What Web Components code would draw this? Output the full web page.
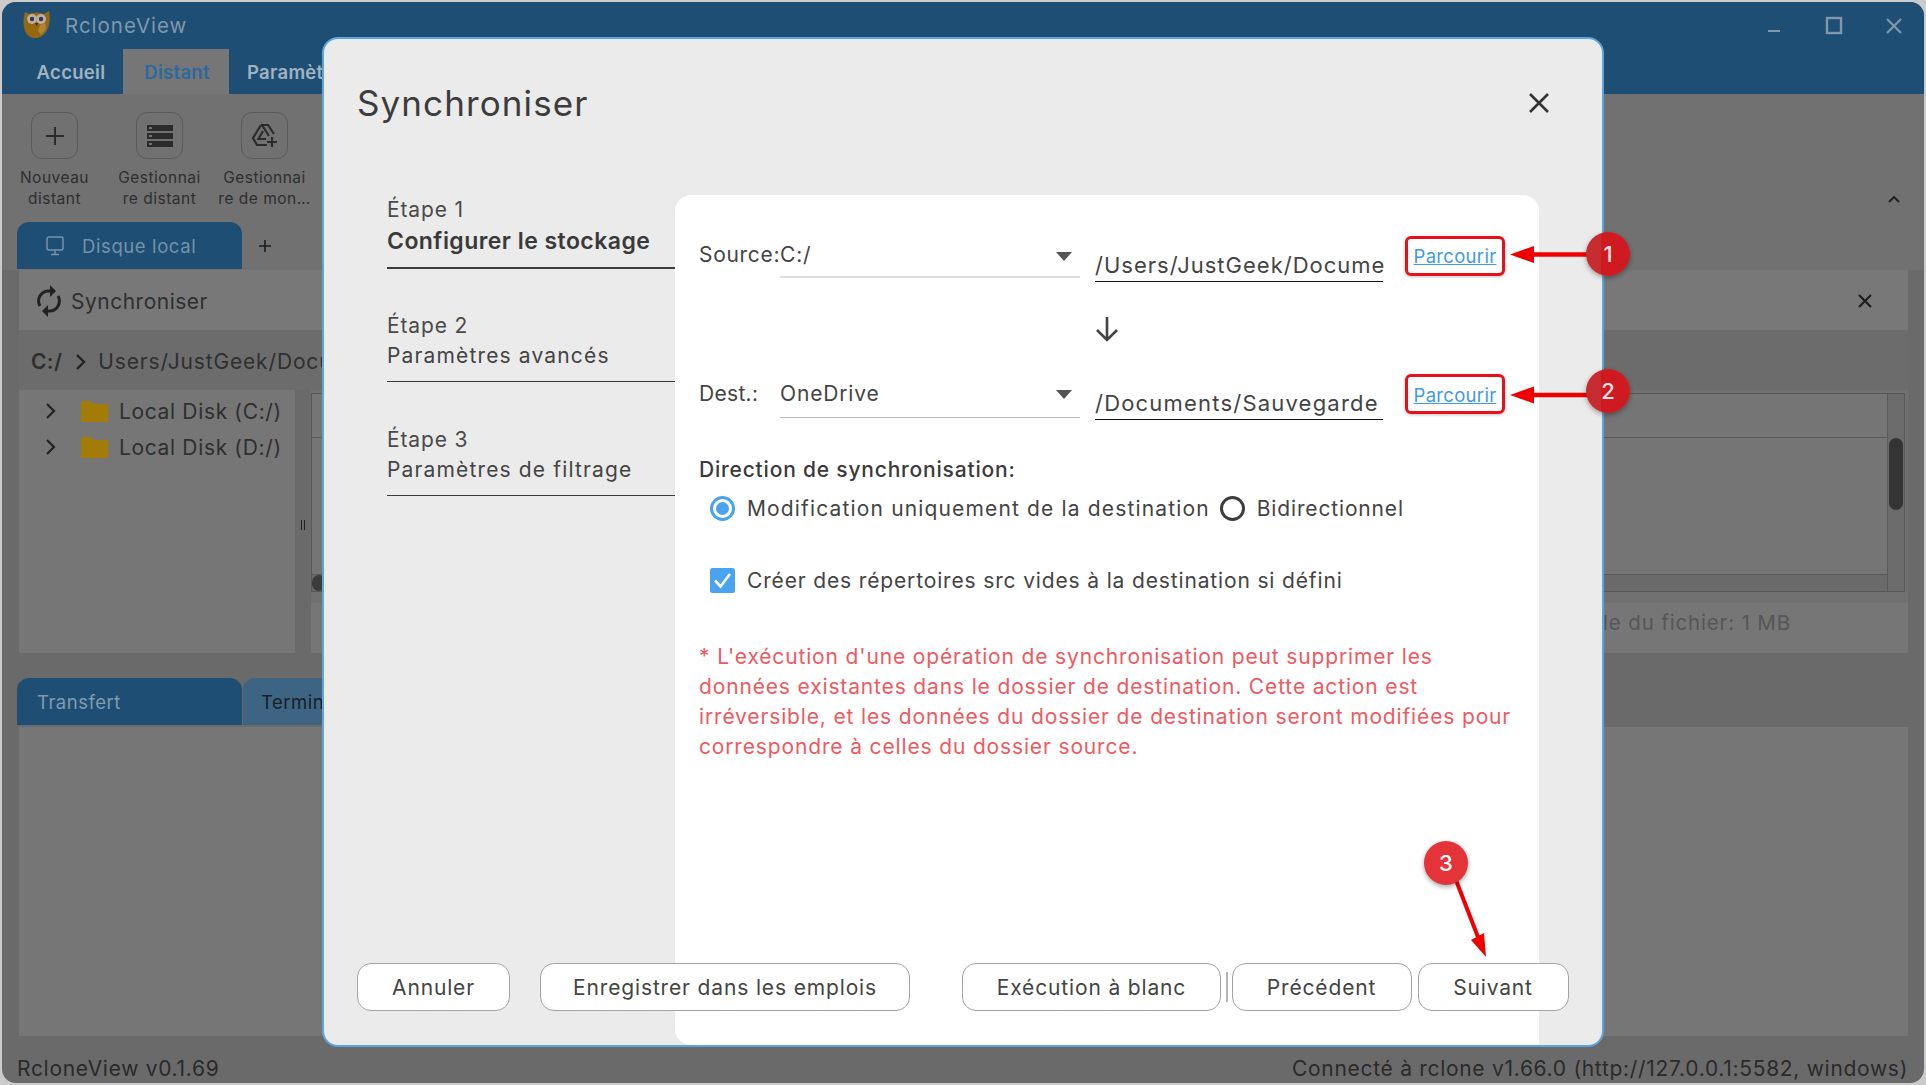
<!DOCTYPE html>
<html lang="fr">
<head>
<meta charset="utf-8">
<title>RcloneView</title>
<style>
html, body { margin: 0; height: 100%; background: #cbcbcb; overflow: hidden; }
body { font-family: Inter, "Open Sans", sans-serif; font-size: 21px; letter-spacing: .85px; color: #333; }
svg { display: block; }
</style>
</head>
<body>
<app-window>
  <title-bar></title-bar>
  <ribbon-tabs></ribbon-tabs>
  <tool-strip>
    <tool-button>
      <svg slot="icon" width="24" height="24" viewBox="0 0 24 24" fill="none" stroke="#2b2b2b" stroke-width="2"><path d="M12 3v18M3 12h18"/></svg>
      Nouveau<br>distant
    </tool-button>
    <tool-button>
      <svg slot="icon" width="26" height="22" viewBox="0 0 26 22"><path fill="#2b2b2b" fill-rule="evenodd" d="M0 0h26v6H0zM0 8h26v6H0zM0 16h26v6H0zM2 2v2h3V2zM2 10v2h3v-2zM2 18v2h3v-2z"/></svg>
      Gestionnai<br>re distant
    </tool-button>
    <tool-button>
      <svg slot="icon" width="28" height="26" viewBox="0 0 28 26" fill="none" stroke="#2b2b2b" stroke-width="2.2"><path d="M10 2h7l6 9M10 2L2 15l4 7h10M11 2l7 11M6 16h9M12 8l-4 7"/><path d="M21 14v10M16 19h10"/></svg>
      Gestionnai<br>re de mon…
    </tool-button>
  </tool-strip>
  <pane-tabs></pane-tabs>
  <browser-pane></browser-pane>
  <transfer-pane></transfer-pane>
  <status-bar></status-bar>

  <sync-dialog>
    <step-item slot="steps" active><span slot="num">Étape 1</span>Configurer le stockage</step-item>
    <step-item slot="steps"><span slot="num">Étape 2</span>Paramètres avancés</step-item>
    <step-item slot="steps"><span slot="num">Étape 3</span>Paramètres de filtrage</step-item>

    <path-row label="Source:" value="C:/" path="/Users/JustGeek/Docume" light></path-row>
    <flow-arrow></flow-arrow>
    <path-row label="Dest.:" value="OneDrive" path="/Documents/Sauvegarde"></path-row>
    <sync-options></sync-options>

    <dlg-button slot="footer" style="--w:153px">Annuler</dlg-button>
    <dlg-button slot="footer" style="--w:370px;margin-left:30px">Enregistrer dans les emplois</dlg-button>
    <dlg-button slot="footer" style="--w:259px;margin-left:52px">Exécution à blanc</dlg-button>
    <dlg-sep slot="footer"></dlg-sep>
    <dlg-button slot="footer" style="--w:180px">Précédent</dlg-button>
    <dlg-button slot="footer" style="--w:151px;margin-left:6px">Suivant</dlg-button>
  </sync-dialog>

  <callout-layer></callout-layer>
</app-window>

<script>
// tiny helper, every element is just a template in an open shadow root
function component(tag, markup) {
  const template = document.createElement('template');
  template.innerHTML = markup;
  customElements.define(tag, class extends HTMLElement {
    constructor() {
      super();
      this.attachShadow({ mode: 'open' });
      this.shadowRoot.appendChild(template.content.cloneNode(true));
    }
  });
}

component('app-window', `
<style>
:host { display:flex; flex-direction:column; position:relative; box-sizing:border-box; margin:2px; height:1081px; width:1922px;
  border-radius:14px; overflow:hidden; background:#6a6a6a; }
</style>
<slot></slot>`);

component('title-bar', `
<style>
:host { display:flex; align-items:center; height:47px; background:#1f4e74; color:#7e98ac; padding-left:20px; flex:none; }
span { margin-left:13px; font-size:20.500px; letter-spacing:1px; }
.logo { margin-top:-5px; }
.ctl { display:flex; margin-left:auto; align-items:center; }
.ctl svg { width:20px; height:20px; margin-left:40px; }
.ctl svg:last-child { margin-right:20px; }
</style>
<svg class="logo" width="30" height="32" viewBox="0 0 30 32">
  <path fill="#94680f" d="M3 5l4 2q7-3 15 0l5-3q2 10-1 17-3 8-11 10-9 1-12-7Q0 15 3 5z"/>
  <path fill="#b98a3a" d="M18 18l5-2 1 6-5 6-3-4z" opacity=".8"/>
  <circle cx="10" cy="12" r="5" fill="#b9b0a0"/><circle cx="19" cy="12" r="5" fill="#b9b0a0"/>
  <circle cx="10" cy="12" r="2.2" fill="#3b3550"/><circle cx="19" cy="12" r="2.2" fill="#3b3550"/>
  <path fill="#3a2a10" d="M13 16h3l-1.500 3z"/>
</svg>
<span>RcloneView</span>
<div class="ctl">
  <svg viewBox="0 0 20 20"><path d="M4 15h12" stroke="#7e98ac" stroke-width="2"/></svg>
  <svg viewBox="0 0 20 20" fill="none"><rect x="3" y="2" width="14" height="15" stroke="#7e98ac" stroke-width="2.4"/></svg>
  <svg viewBox="0 0 20 20" fill="none"><path d="M3 3l14 14M17 3L3 17" stroke="#7e98ac" stroke-width="2.200"/></svg>
</div>`);

component('ribbon-tabs', `
<style>
:host { display:flex; height:45px; background:#1f4e74; flex:none; font-size:18.500px; font-weight:600; letter-spacing:.3px; color:#a0b3c2; }
div { display:flex; align-items:center; justify-content:center; height:45px; box-sizing:border-box; }
.a { width:121px; padding-left:17px; }
.b { width:106px; background:#767676; color:#2a6a9e; padding-left:2px; }
.c { margin-left:18px; white-space:nowrap; }
</style>
<div class="a">Accueil</div><div class="b">Distant</div><div class="c">Paramètres</div>`);

component('tool-strip', `
<style>
:host { display:flex; position:relative; height:128px; padding-top:18px; box-sizing:border-box; flex:none; background:#717171; }
svg { position:absolute; right:23px; top:100px; }
</style>
<slot></slot>
<svg width="14" height="10" viewBox="0 0 14 10" fill="none" stroke="#222" stroke-width="2"><path d="M2 8l5-5 5 5"/></svg>`);

component('tool-button', `
<style>
:host { display:flex; flex-direction:column; align-items:center; width:105px; font-size:15.5px; line-height:21px; letter-spacing:.5px; color:#2e2e2e; text-align:center; }
.btn { width:47px; height:47px; box-sizing:border-box; border:1.500px solid #5b5b5b; border-radius:11px; display:flex; align-items:center; justify-content:center; margin-bottom:8px; }
</style>
<div class="btn"><slot name="icon"></slot></div>
<div><slot></slot></div>`);

component('pane-tabs', `
<style>
:host { display:flex; align-items:center; height:48px; padding-left:15px; flex:none; background:#717171; }
.tab { display:flex; align-items:center; width:225px; height:47px; align-self:flex-start; box-sizing:border-box; padding-left:29px; border-radius:12px 12px 0 0; background:#1f4e74; color:#7492a9; font-size:18.500px; letter-spacing:.6px; }
span { margin-left:18px; }
svg.add { margin-left:15px; }
</style>
<div class="tab">
  <svg width="18" height="20" viewBox="0 0 18 20" fill="none" stroke="#7492a9" stroke-width="1.500"><rect x="1" y="1" width="16" height="13" rx="2"/><path d="M9 14v4M5 18.500h8"/></svg>
  <span>Disque local</span>
</div>
<svg class="add" width="16" height="16" viewBox="0 0 16 16" stroke="#1c1c1c" stroke-width="1.600"><path d="M8 2v12M2 8h12"/></svg>`);

component('browser-pane', `
<style>
:host { display:flex; flex-direction:column; margin:0 16px 0 17px; height:383px; flex:none; color:#2f2f2f; }
.head { display:flex; align-items:center; height:60px; box-sizing:border-box; padding:2px 0 0 17px; background:#787878; }
.head span { margin-left:9px; letter-spacing:.5px; }
.head .x { margin-left:auto; margin-right:35px; }
.crumb { display:flex; align-items:center; height:60px; box-sizing:border-box; background:#6c6c6c; padding:3px 0 0 12px; white-space:nowrap; overflow:hidden; }
.crumb b { font-weight:600; letter-spacing:.4px; }
.crumb svg { margin:0 11px 0 13px; }
.split { display:flex; height:263px; }
.tree { width:276px; background:#767676; box-sizing:border-box; padding-top:3px; }
.row { display:flex; align-items:center; height:36px; padding-left:26px; white-space:nowrap; letter-spacing:.65px; }
.row .f { margin:0 11px 0 24px; }
.bar { width:16px; position:relative; }
.bar i { position:absolute; left:6px; top:130px; width:1.500px; height:10px; border-left:1.500px solid #222; border-right:1.500px solid #222; }
.right { flex:1; display:flex; flex-direction:column; padding-top:3px; background:#717171; position:relative; }
.table { position:relative; height:199px; margin-right:3px; box-sizing:border-box; border:1.500px solid #585858; background:#757575; }
.table .hd { position:absolute; left:0; right:0; top:0; height:43px; border-bottom:1.500px solid #5a5a5a; }
.table .vs { position:absolute; right:0; top:0; bottom:0; width:16px; background:#6c6c6c; border-left:1.500px solid #5a5a5a; }
.table .thumb { position:absolute; right:1px; top:44px; width:14px; height:72px; border-radius:8px; background:#343434; }
.table .hs { position:absolute; left:0; right:0; bottom:0; height:16px; background:#6a6a6a; border-top:1.500px solid #5a5a5a; }
.table .dot { position:absolute; left:0; bottom:0; width:14px; height:16px; border-radius:8px; background:#3c3c3c; }
.foot { margin-top:11px; height:50px; line-height:40px; background:#767676; color:#565656; font-size:20.500px; text-align:right; padding-right:117px; white-space:nowrap; overflow:hidden; }
</style>
<div class="head">
  <svg width="26" height="32" viewBox="0 0 26 32" fill="none" stroke="#222" stroke-width="3"><path d="M4 21a10 10 0 0 1 9-15h2M22 11a10 10 0 0 1-9 15h-2"/><path fill="#222" stroke="none" d="M14 0l6 6-6 6zM12 20l-6 6 6 6z"/></svg>
  <span>Synchroniser</span>
  <svg class="x" width="16" height="16" viewBox="0 0 16 16" stroke="#1e1e1e" stroke-width="2.200"><path d="M2 2l12 12M14 2L2 14"/></svg>
</div>
<div class="crumb"><b>C:/</b>
  <svg width="12" height="18" viewBox="0 0 12 18" fill="none" stroke="#222" stroke-width="2.400"><path d="M2 2l7 7-7 7"/></svg>
  <span>Users/JustGeek/Documents</span>
</div>
<div class="split">
  <div class="tree">
    <div class="row"><svg width="12" height="18" viewBox="0 0 12 18" fill="none" stroke="#222" stroke-width="2.200"><path d="M2 2l7 7-7 7"/></svg><svg class="f" width="27" height="21" viewBox="0 0 27 21"><path fill="#a37c08" d="M0 1.500q0-1.500 1.500-1.500h8l3 3h13q1.500 0 1.500 1.500v15q0 1.500-1.500 1.500h-24q-1.500 0-1.500-1.500z"/></svg>Local Disk (C:/)</div>
    <div class="row"><svg width="12" height="18" viewBox="0 0 12 18" fill="none" stroke="#222" stroke-width="2.200"><path d="M2 2l7 7-7 7"/></svg><svg class="f" width="27" height="21" viewBox="0 0 27 21"><path fill="#a37c08" d="M0 1.500q0-1.500 1.500-1.500h8l3 3h13q1.500 0 1.500 1.500v15q0 1.500-1.500 1.500h-24q-1.500 0-1.500-1.500z"/></svg>Local Disk (D:/)</div>
  </div>
  <div class="bar"><i></i></div>
  <div class="right">
    <div class="table"><div class="hd"></div><div class="hs"><div class="dot"></div></div><div class="vs"><div class="thumb"></div></div></div>
    <div class="foot">Taille totale du fichier: 1 MB</div>
  </div>
</div>`);

component('transfer-pane', `
<style>
:host { display:flex; flex-direction:column; margin:25px 16px 0 15px; flex:none; height:358px; font-size:18.500px; letter-spacing:.5px; }
.tabs { display:flex; height:47px; }
.tabs div { width:225px; display:flex; align-items:center; box-sizing:border-box; padding-left:20px; border-radius:12px 12px 0 0; }
.on { background:#1f4e74; color:#7f9bb1; }
.off { margin-left:1px; background:#3e6483; color:#15202a; padding-left:18px !important; }
.body { margin:2px 0 0 2px; height:309px; background:#767676; }
</style>
<div class="tabs"><div class="on">Transfert</div><div class="off">Terminé</div></div>
<div class="body"></div>`);

component('status-bar', `
<style>
:host { display:flex; justify-content:space-between; align-items:center; box-sizing:border-box; padding:17px 16px 0 15px; height:47px; flex:none; color:#2a2a2a; white-space:nowrap; letter-spacing:.7px; }
</style>
<span>RcloneView v0.1.69</span>
<span>Connecté à rclone v1.66.0 (http://127.0.0.1:5582, windows)</span>`);

component('sync-dialog', `
<style>
:host { position:absolute; left:320px; top:35px; width:1282px; height:1010px; box-sizing:border-box; display:flex; flex-direction:column;
  background:#ebebeb; border:2px solid #5ba6e2; border-radius:16px; overflow:hidden; }
header { display:flex; align-items:center; height:156px; flex:none; padding:0 0 28px 33px; box-sizing:border-box; }
h2 { margin:0; font-size:35px; font-weight:400; letter-spacing:1.100px; color:#3c3c3c; line-height:44px; }
header svg { margin-left:auto; margin-right:51px; }
.body { flex:1; display:flex; min-height:0; }
.steps { width:351px; box-sizing:border-box; padding-left:63px; flex:none; }
.panel { width:864px; background:#fff; border-radius:16px 16px 0 16px; box-sizing:border-box; padding:41px 24px 0; }
footer { position:absolute; left:33px; bottom:34px; display:flex; align-items:center; }
</style>
<header>
  <h2>Synchroniser</h2>
  <svg width="24" height="24" viewBox="0 0 24 24" stroke="#333" stroke-width="2.600"><path d="M3 3l18 18M21 3L3 21"/></svg>
</header>
<div class="body">
  <div class="steps"><slot name="steps"></slot></div>
  <div class="panel"><slot></slot></div>
</div>
<footer><slot name="footer"></slot></footer>`);

component('step-item', `
<style>
:host { display:block; margin-bottom:43px; padding-top:1px; border-bottom:1.500px solid #3c3c3c; padding-bottom:9px; color:#444; letter-spacing:1.150px; }
:host([active]) { margin-bottom:42px; border-bottom-width:2px; font-weight:600; font-size:23px; letter-spacing:.45px; color:#3a3a3a; padding-top:1px; padding-bottom:10px; }
.n { font-size:21px; font-weight:400; letter-spacing:.85px; line-height:28px; color:#4a4a4a; }
.t { line-height:32px; white-space:nowrap; }
:host([active]) .t { margin-top:1px; }
</style>
<div class="n"><slot name="num"></slot></div>
<div class="t"><slot></slot></div>`);

class PathRow extends HTMLElement {
  constructor() {
    super();
    this.attachShadow({ mode: 'open' });
    const light = this.hasAttribute('light');
    this.shadowRoot.innerHTML = `
<style>
:host { display:flex; align-items:flex-start; height:46px; color:#444; }
.label { width:81px; line-height:${light ? 38 : 40}px; flex:none; letter-spacing:${light ? .7 : .3}px; }
.sel { width:300px; height:${light ? 42 : 44}px; box-sizing:border-box; border-bottom:${light ? '2px solid #dedede' : '1.5px solid #bbb'}; display:flex; justify-content:space-between; line-height:${light ? 38 : 40}px; flex:none; }
.sel svg { margin:16px 8px 0 0; }
.path { width:288px; height:46px; margin-left:15px; box-sizing:border-box; border-bottom:1.500px solid #111; white-space:nowrap; line-height:58px; font-size:22px; flex:none; letter-spacing:${light ? 1 : 1.2}px; }
a { display:flex; align-items:center; justify-content:center; width:100px; height:40px; margin-left:22px; box-sizing:border-box; border:3px solid #e8101a; border-radius:6px; color:#3d9ae6; text-decoration:underline; font-size:18.500px; letter-spacing:.3px; background:#fff; box-shadow:0 1px 3px rgba(0,0,0,.25); padding-top:${light ? 0 : 1}px; }
</style>
<div class="label">${this.getAttribute('label')}</div>
<div class="sel"><span>${this.getAttribute('value')}</span><svg width="16" height="9" viewBox="0 0 16 9"><path fill="#555" d="M0 0h16l-8 9z"/></svg></div>
<div class="path">${this.getAttribute('path')}</div>
<a>Parcourir</a>`;
  }
}
customElements.define('path-row', PathRow);

component('flow-arrow', `
<style>
:host { display:block; height:92px; padding:34px 0 0 396px; box-sizing:border-box; }
</style>
<svg width="24" height="26" viewBox="0 0 24 26" fill="none" stroke="#444" stroke-width="2.600"><path d="M12 1v23M2 14l10 10 10-10"/></svg>`);

component('sync-options', `
<style>
:host { display:block; color:#444; padding-top:35px; }
.title { line-height:30px; font-weight:500; color:#3a3a3a; letter-spacing:.8px; }
.row { display:flex; align-items:center; height:30px; padding-left:11px; white-space:nowrap; }
.row.first { margin-top:8px; }
.row.check { margin-top:42px; }
.row .lb { margin-left:12px; }
.wide { letter-spacing:1.150px; }
.radio { width:25px; height:25px; box-sizing:border-box; border-radius:50%; border:3px solid #3d3d3d; flex:none; }
.radio.on { border-color:#4aa3ee; position:relative; }
.radio.on::after { content:""; position:absolute; inset:3px; background:#4aa3ee; border-radius:50%; }
.second { margin-left:10px; }
.cb { width:25px; height:25px; flex:none; }
p { margin:47px 0 0; line-height:30px; color:#ee5a5f; width:840px; }
</style>
<div class="title">Direction de synchronisation:</div>
<div class="row first"><span class="radio on"></span><span class="lb wide">Modification uniquement de la destination</span><span class="radio second"></span><span class="lb">Bidirectionnel</span></div>
<div class="row check">
  <svg class="cb" viewBox="0 0 25 25"><rect width="25" height="25" rx="2.500" fill="#4aa3ee"/><path d="M5 12.500l5.500 6L20 6" fill="none" stroke="#fff" stroke-width="2.600"/></svg>
  <span class="lb">Créer des répertoires src vides à la destination si défini</span>
</div>
<p>* L'exécution d'une opération de synchronisation peut supprimer les<br>données existantes dans le dossier de destination. Cette action est<br>irréversible, et les données du dossier de destination seront modifiées pour<br>correspondre à celles du dossier source.</p>`);

component('dlg-button', `
<style>
:host { display:flex; align-items:center; justify-content:center; width:var(--w); height:48px; box-sizing:border-box; border:1.500px solid #a4a4a4; border-radius:14px; background:#fff; color:#444; white-space:nowrap; padding-top:1px; }
</style>
<slot></slot>`);

component('dlg-sep', `
<style>
:host { display:block; width:1.500px; height:30px; background:#b5b5b5; margin:0 4px 0 5px; }
</style>`);

component('callout-layer', `
<style>
:host { position:absolute; left:0; top:0; width:100%; height:100%; pointer-events:none; }
svg { position:absolute; left:0; top:0; }
.b { position:absolute; width:44px; height:44px; margin:-22px 0 0 -22px; border-radius:50%; background:linear-gradient(90deg,#c62c30 0 15px,#cf1a21 15px); color:#f2e4e4; display:flex; align-items:center; justify-content:center; font-size:22px; font-weight:500; letter-spacing:0; box-shadow:0 2px 5px rgba(0,0,0,.35); }
.b.w { background:#e4343a; color:#fff; }
</style>
<svg width="1922" height="1081" viewBox="2 2 1922 1081">
  <path d="M1590 254.500H1530" stroke="#f00000" stroke-width="4.500"/><path fill="#f00000" d="M1510 254.500l24-8.500v17z"/>
  <path d="M1590 395H1530" stroke="#f00000" stroke-width="4.500"/><path fill="#f00000" d="M1510 395l24-8.500v17z"/>
  <path d="M1454 875L1478 937" stroke="#f00000" stroke-width="4"/><path fill="#f00000" d="M1486 957l-15-17 13-7z"/>
</svg>
<div class="b" style="left:1606px;top:252px">1</div>
<div class="b" style="left:1606px;top:389px">2</div>
<div class="b w" style="left:1444px;top:861px">3</div>`);
</script>
</body>
</html>
